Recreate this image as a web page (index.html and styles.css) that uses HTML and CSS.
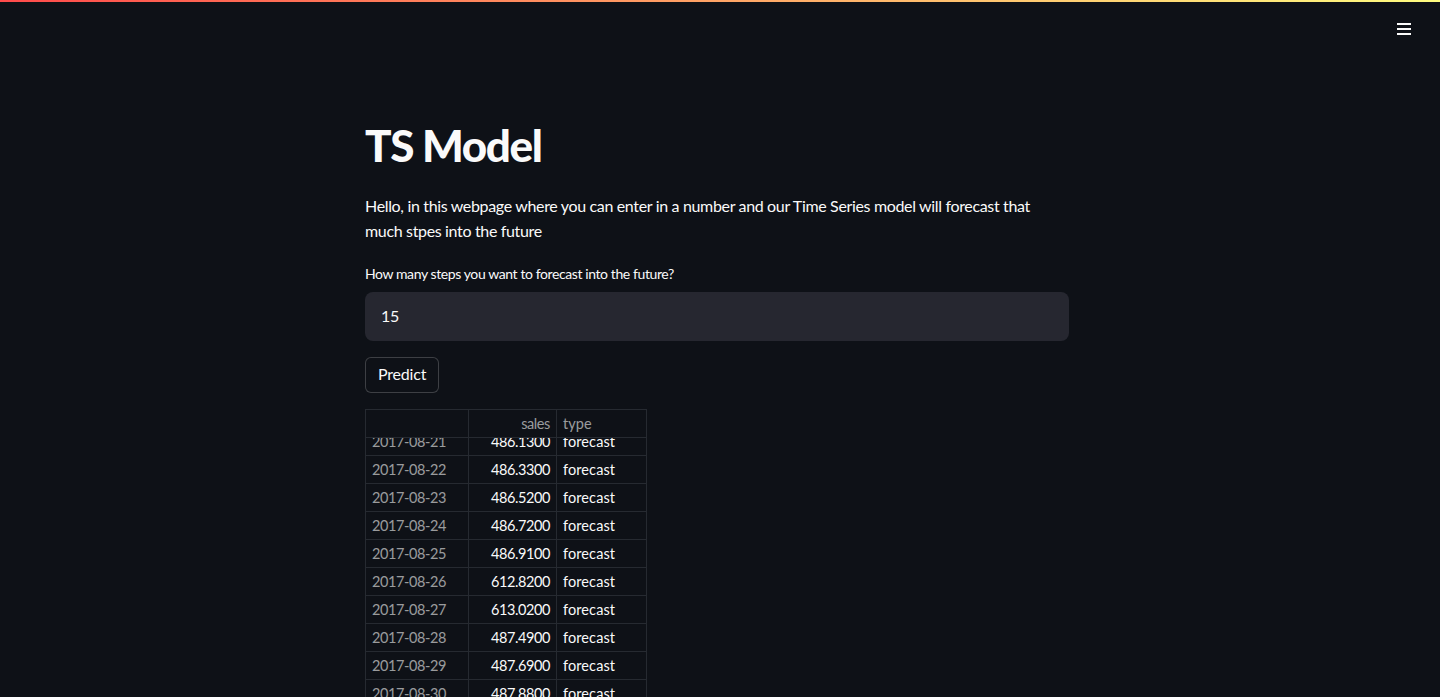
FILE: index.html
```html
<!DOCTYPE html>
<html lang="en">
<head>
<meta charset="utf-8">
<title>TS Model</title>
<link rel="stylesheet" href="styles.css">
</head>
<body>
<div class="decoration"></div>
<header class="toolbar">
  <button class="menu" aria-label="Main menu">
    <svg width="16" height="14" viewBox="0 0 16 14"><rect x="1" y="1" width="14" height="2" fill="#fafafa"/><rect x="1" y="6" width="14" height="2" fill="#fafafa"/><rect x="1" y="11" width="14" height="2" fill="#fafafa"/></svg>
  </button>
</header>
<main class="app">
  <div class="block">
    <h1 class="title">TS Model</h1>
    <p class="intro">Hello, in this webpage where you can enter in a number and our Time Series model will forecast that much stpes into the future</p>
    <label class="label" for="steps">How many steps you want to forecast into the future?</label>
    <div class="input-wrap"><input id="steps" class="input" type="text" value="15"></div>
    <button class="btn">Predict</button>
    <div class="table">
      <div class="thead">
        <div class="cell idx"></div>
        <div class="cell num hd">sales</div>
        <div class="cell txt hd">type</div>
      </div>
      <div class="tbody">
        <div class="rows">
          <div class="row"><div class="cell idx">2017-08-21</div><div class="cell num">486.1300</div><div class="cell txt">forecast</div></div>
          <div class="row"><div class="cell idx">2017-08-22</div><div class="cell num">486.3300</div><div class="cell txt">forecast</div></div>
          <div class="row"><div class="cell idx">2017-08-23</div><div class="cell num">486.5200</div><div class="cell txt">forecast</div></div>
          <div class="row"><div class="cell idx">2017-08-24</div><div class="cell num">486.7200</div><div class="cell txt">forecast</div></div>
          <div class="row"><div class="cell idx">2017-08-25</div><div class="cell num">486.9100</div><div class="cell txt">forecast</div></div>
          <div class="row"><div class="cell idx">2017-08-26</div><div class="cell num">612.8200</div><div class="cell txt">forecast</div></div>
          <div class="row"><div class="cell idx">2017-08-27</div><div class="cell num">613.0200</div><div class="cell txt">forecast</div></div>
          <div class="row"><div class="cell idx">2017-08-28</div><div class="cell num">487.4900</div><div class="cell txt">forecast</div></div>
          <div class="row"><div class="cell idx">2017-08-29</div><div class="cell num">487.6900</div><div class="cell txt">forecast</div></div>
          <div class="row"><div class="cell idx">2017-08-30</div><div class="cell num">487.8800</div><div class="cell txt">forecast</div></div>
          <div class="row"><div class="cell idx">2017-08-31</div><div class="cell num">488.0700</div><div class="cell txt">forecast</div></div>
        </div>
      </div>
    </div>
  </div>
</main>
</body>
</html>
```

FILE: styles.css
```css
* { box-sizing: border-box; }
html, body {
  margin: 0;
  padding: 0;
  height: 697px;
  overflow: hidden;
  background: #0e1117;
  color: #fafafa;
  font-family: "Lato", "Noto Sans", sans-serif;
}
.decoration {
  position: absolute;
  top: 0; left: 0; right: 0;
  height: 2px;
  background: linear-gradient(90deg, #ff4b4b, #fffd80);
}
.toolbar {
  position: absolute;
  top: 0; right: 0;
  display: flex;
  padding: 22px 28px 0 0;
}
.menu {
  background: none;
  border: 0;
  padding: 0;
  width: 16px;
  height: 14px;
  display: block;
  cursor: pointer;
}
.menu svg { display: block; }
.app {
  display: flex;
  justify-content: center;
  padding: 119px 6px 0 0;
}
.block {
  width: 704px;
  display: flex;
  flex-direction: column;
  align-items: flex-start;
}
.title {
  margin: 0;
  font-size: 44px;
  line-height: 52px;
  font-weight: 900;
  letter-spacing: -1.4px;
}
.intro {
  margin: 22px 0 0;
  font-size: 16px;
  line-height: 25px;
  letter-spacing: -0.34px;
}
.label {
  margin-top: 22px;
  font-size: 14px;
  line-height: 18px;
  letter-spacing: -0.4px;
}
.input-wrap {
  margin-top: 9px;
  width: 100%;
  height: 49px;
  background: #262730;
  border-radius: 8px;
  display: flex;
  align-items: center;
  padding-bottom: 2px;
}
.input {
  width: 100%;
  background: transparent;
  border: 0;
  outline: none;
  color: #fafafa;
  font-family: inherit;
  font-size: 16px;
  padding: 0 16px;
  letter-spacing: -0.2px;
}
.btn {
  margin-top: 16px;
  height: 36px;
  padding: 0 12px 4px;
  background: #0e1117;
  color: #fafafa;
  border: 1px solid rgba(250,250,250,0.2);
  border-radius: 6px;
  font-family: inherit;
  font-size: 16px;
  letter-spacing: -0.2px;
}
.table {
  margin-top: 16px;
  width: 282px;
  border: 1px solid #262a31;
  font-size: 14.5px;
}
.thead, .row {
  display: grid;
  grid-template-columns: 103px 88px 89px;
}
.thead { height: 28px; border-bottom: 1px solid #262a31; }
.tbody { height: 360px; overflow: hidden; }
.rows { margin-top: -10px; }
.row { height: 28px; border-bottom: 1px solid #262a31; }
.cell {
  display: flex;
  align-items: center;
  padding: 0 6px;
  border-right: 1px solid #262a31;
  white-space: nowrap;
  letter-spacing: -0.4px;
}
.cell:last-child { border-right: 0; }
.idx { color: rgba(250,250,250,0.6); }
.num { justify-content: flex-end; }
.txt { letter-spacing: 0.1px; }
.hd { color: rgba(250,250,250,0.6); }
```
